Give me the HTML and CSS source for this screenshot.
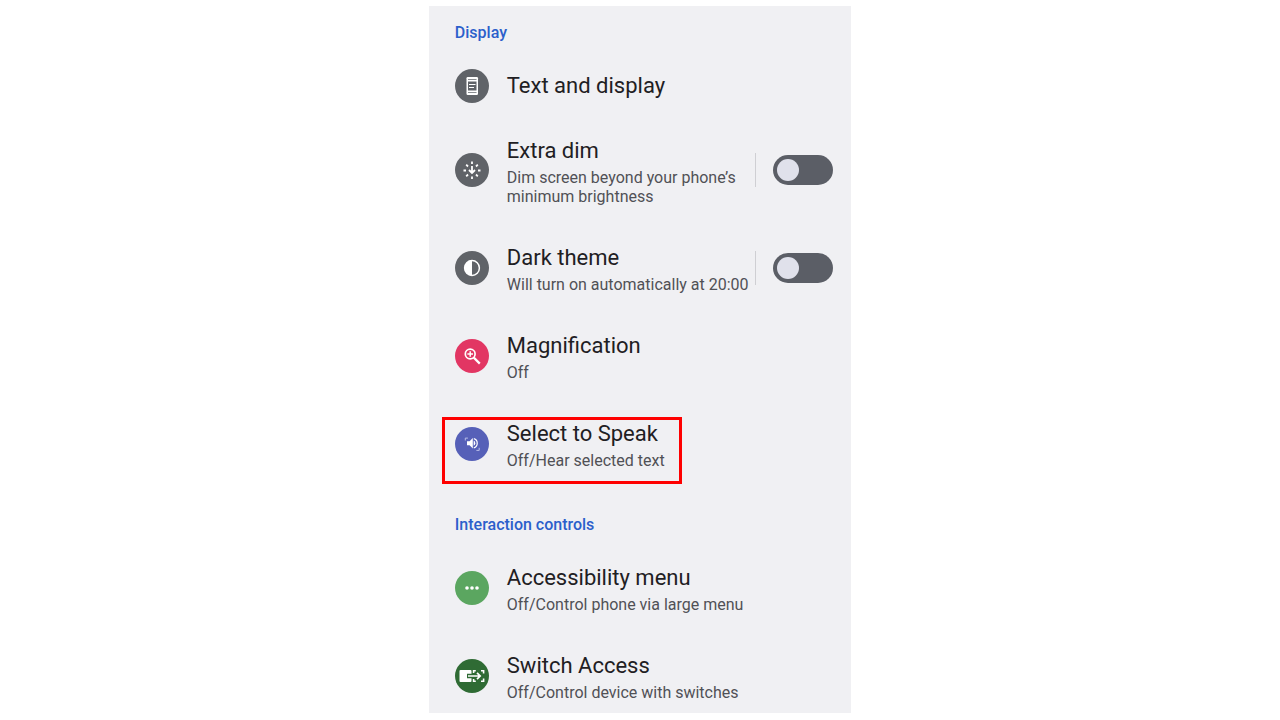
FILE: index.html
```html
<!DOCTYPE html>
<html lang="en">
<head>
    <meta charset="UTF-8">
    <meta name="viewport" content="width=device-width, initial-scale=1.0">
    <title>Accessibility</title>
    <link rel="stylesheet" href="styles.css">
</head>
<body>
    <main class="settings">
        <section>
            <h2 class="heading">Display</h2>

            <div class="row row-single">
                <svg class="icon gray" viewBox="0 0 34 34" aria-hidden="true">
                    <rect x="11.5" y="8" width="11.5" height="18" rx="1.2" fill="#fff"/>
                    <path d="M13 10.5h8.5M13 23.5h8.5" stroke="#8b8e92" stroke-width="1"/>
                    <rect x="13" y="12.5" width="8.5" height="9" fill="#606368"/>
                    <path d="M14 15.5h6.5M14 18.5h5" stroke="#fff" stroke-width="1.2"/>
                </svg>
                <div class="text">
                    <h3 class="title">Text and display</h3>
                </div>
            </div>

            <div class="row">
                <svg class="icon gray" viewBox="0 0 34 34" aria-hidden="true">
                    <g fill="none" stroke="#fff" stroke-width="1.8">
                        <path d="M17 8.5v2.5M17 23.5v2.5M8.5 17.5h2.5M23 17.5h2.5M11.2 11.7l1.8 1.8M21 13.5l1.8-1.8M11.2 23.3l1.8-1.8M22.8 23.3l-1.8-1.8"/>
                        <path d="M17 13v7M14 17l3 3 3-3"/>
                    </g>
                </svg>
                <div class="text">
                    <h3 class="title"><label for="extra-dim">Extra dim</label></h3>
                    <p class="summary">Dim screen beyond your phone’s minimum brightness</p>
                </div>
                <div class="control">
                    <input class="switch" type="checkbox" role="switch" id="extra-dim">
                </div>
            </div>

            <div class="row">
                <svg class="icon gray" viewBox="0 0 34 34" aria-hidden="true">
                    <circle cx="17" cy="17" r="7.4" fill="none" stroke="#fff" stroke-width="1.5"/>
                    <path d="M17 9.5a7.5 7.5 0 0 0 0 15z" fill="#fff"/>
                </svg>
                <div class="text">
                    <h3 class="title"><label for="dark-theme">Dark theme</label></h3>
                    <p class="summary">Will turn on automatically at 20:00</p>
                </div>
                <div class="control">
                    <input class="switch" type="checkbox" role="switch" id="dark-theme">
                </div>
            </div>

            <div class="row">
                <svg class="icon pink" viewBox="0 0 34 34" aria-hidden="true">
                    <g fill="none" stroke="#fff" stroke-width="1.7">
                        <circle cx="15.2" cy="15" r="4.9"/>
                        <path d="M18.8 18.6l6 6" stroke-width="2.2"/>
                        <path d="M15.2 12.2v5.6M12.4 15h5.6" stroke-width="1.5"/>
                    </g>
                </svg>
                <div class="text">
                    <h3 class="title">Magnification</h3>
                    <p class="summary">Off</p>
                </div>
            </div>

            <div class="row highlight">
                <svg class="icon indigo" viewBox="0 0 34 34" aria-hidden="true">
                    <path d="M12 14.2h2.6l3.2-3.2v10.4l-3.2-3.2H12z" fill="#fff"/>
                    <path d="M18.7 13.6a2.9 2.9 0 0 1 0 5.2z" fill="#fff"/>
                    <path d="M18.8 11.6a4.8 4.8 0 0 1 0 9.2" fill="none" stroke="#fff" stroke-width="1.2"/>
                    <path d="M10.3 13.5v-2.4h2.6M24.2 20.8v2.6h-2.8" fill="none" stroke="#b9bee8" stroke-width="1"/>
                </svg>
                <div class="text">
                    <h3 class="title">Select to Speak</h3>
                    <p class="summary">Off/Hear selected text</p>
                </div>
            </div>
        </section>

        <section>
            <h2 class="heading">Interaction controls</h2>

            <div class="row">
                <svg class="icon green" viewBox="0 0 34 34" aria-hidden="true">
                    <g fill="#fff">
                        <circle cx="12" cy="17" r="1.8"/>
                        <circle cx="17" cy="17" r="1.8"/>
                        <circle cx="22" cy="17" r="1.8"/>
                    </g>
                </svg>
                <div class="text">
                    <h3 class="title">Accessibility menu</h3>
                    <p class="summary">Off/Control phone via large menu</p>
                </div>
            </div>

            <div class="row">
                <svg class="icon dark-green" viewBox="0 0 34 34" aria-hidden="true">
                    <rect x="4.5" y="11" width="12" height="12" rx="1" fill="#fff"/>
                    <path d="M12 17h10" stroke="#2f6b34" stroke-width="4.4"/>
                    <path d="M18.6 14v-2.2h2.2M18.6 20v2.2h2.2M26 11.8h2.6v2.6M28.6 19.6v2.6H26" fill="none" stroke="#fff" stroke-width="1.6"/>
                    <path d="M13 17h11.5M22 13.8l3.2 3.2-3.2 3.2" fill="none" stroke="#fff" stroke-width="1.7"/>
                </svg>
                <div class="text">
                    <h3 class="title">Switch Access</h3>
                    <p class="summary">Off/Control device with switches</p>
                </div>
            </div>
        </section>
    </main>
</body>
</html>
```

FILE: styles.css
```css
body {
    margin: 0;
    background-color: #fff;
    color: #1f2023;
    font-family: Roboto, Arial, sans-serif;
}
.settings {
    box-sizing: border-box;
    width: 33%;
    min-width: 420px;
    margin: 6px auto 0;
    padding: 7px 18px 0 26px;
    background-color: #f0f0f3;
}
.settings section:last-child .row:last-child {
    padding-bottom: 11px;
}
.heading {
    margin: 0;
    padding: 10px 0 26px;
    color: #2b5fcb;
    font-size: 16px;
    font-weight: 500;
    line-height: 20px;
}
.row {
    display: flex;
    align-items: center;
    padding-bottom: 35px;
}
.row-single {
    padding-bottom: 31px;
}
.icon {
    flex: none;
    width: 34px;
    height: 34px;
    margin-right: 18px;
    border-radius: 50%;
}
.gray {
    background-color: #606368;
}
.pink {
    background-color: #e23663;
}
.indigo {
    background-color: #5660b8;
}
.green {
    background-color: #5ba660;
}
.dark-green {
    background-color: #2f6b34;
}
.text {
    flex: 1;
}
.title {
    margin: 0;
    font-size: 22px;
    font-weight: 400;
    line-height: 34px;
}
.summary {
    margin: 0;
    color: #505156;
    font-size: 16px;
    line-height: 19px;
}
.control {
    display: flex;
    align-items: center;
    height: 34px;
    padding-left: 17px;
    border-left: 1px solid #cfcfd3;
}
.switch {
    appearance: none;
    width: 60px;
    height: 30px;
    margin: 0;
    padding: 4px;
    box-sizing: border-box;
    border-radius: 15px;
    background-color: #5b5e66;
    cursor: pointer;
}
.switch::before {
    content: "";
    display: block;
    width: 22px;
    height: 22px;
    border-radius: 50%;
    background-color: #e0e1eb;
}
.switch:checked::before {
    margin-left: auto;
}
.highlight {
    position: relative;
}
/* red frame around the row */
.highlight::after {
    content: "";
    position: absolute;
    top: 0;
    left: -13px;
    box-sizing: border-box;
    width: 240px;
    height: 67px;
    border: 3px solid #fe0000;
}
```
